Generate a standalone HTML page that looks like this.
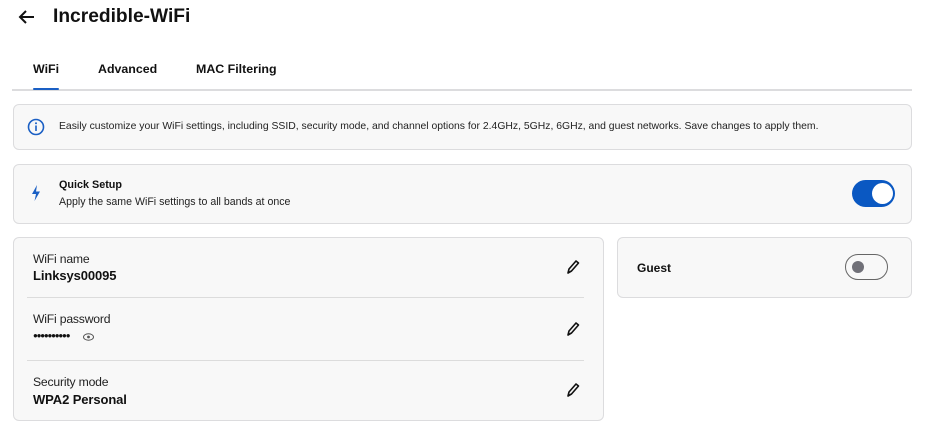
<!DOCTYPE html>
<html><head><style>
body{margin:0;width:938px;height:435px;background:#fff;font-family:"Liberation Sans",sans-serif;color:#111;position:relative;overflow:hidden}
.a{position:absolute}
.box{position:absolute;background:#f8f8f8;border:1.5px solid #dcdcde;border-radius:6px;box-sizing:border-box}
.lbl{font-size:12.2px;color:#222;letter-spacing:-0.2px}
.val{font-size:13px;font-weight:bold;letter-spacing:-0.1px}
.hr{position:absolute;left:27px;width:557px;height:1px;background:#dcdcdc}
</style></head><body>
<svg class="a" style="left:17px;top:9px" width="18" height="16" viewBox="0 0 18 16"><path d="M17 8H3M9 2L3 8l6 6" stroke="#111" stroke-width="2" fill="none"/></svg>
<div class="a" style="left:53px;top:6px;font-size:19.2px;font-weight:bold">Incredible-WiFi</div>
<div class="a" style="left:33px;top:62px;font-size:12.4px;font-weight:bold">WiFi</div>
<div class="a" style="left:98px;top:62px;font-size:12.4px;font-weight:bold">Advanced</div>
<div class="a" style="left:196px;top:62px;font-size:12.4px;font-weight:bold">MAC Filtering</div>
<div class="a" style="left:12px;top:89px;width:900px;height:1.5px;background:#dcdcde"></div>
<div class="a" style="left:33px;top:87.5px;width:26px;height:2.5px;background:#1a5fc4;border-radius:1px"></div>
<div class="box" style="left:13px;top:104px;width:899px;height:46px"></div>
<svg class="a" style="left:27px;top:118px" width="18" height="18" viewBox="0 0 18 18"><circle cx="9" cy="9" r="7.5" stroke="#1a5fc4" stroke-width="1.6" fill="none"/><rect x="8.2" y="7.5" width="1.6" height="5.5" fill="#1a5fc4"/><circle cx="9" cy="5.3" r="1" fill="#1a5fc4"/></svg>
<div class="a" style="left:59px;top:121px;font-size:10.4px;color:#222">Easily customize your WiFi settings, including SSID, security mode, and channel options for 2.4GHz, 5GHz, 6GHz, and guest networks. Save changes to apply them.</div>
<div class="box" style="left:13px;top:164px;width:899px;height:60px"></div>
<svg class="a" style="left:31px;top:185px" width="10" height="16" viewBox="0 0 10 16"><path d="M6 0L1 9h4l-1.5 7L9 6.5H5z" fill="#1a5fc4"/></svg>
<div class="a" style="left:59px;top:179px;font-size:10.8px;font-weight:bold">Quick Setup</div>
<div class="a" style="left:59px;top:196px;font-size:10.6px;color:#222">Apply the same WiFi settings to all bands at once</div>
<div class="a" style="left:852px;top:180px;width:43px;height:27px;border-radius:14px;background:#0a58c2"></div>
<div class="a" style="left:872px;top:183px;width:21px;height:21px;border-radius:50%;background:#fff"></div>
<div class="box" style="left:13px;top:237px;width:591px;height:184px"></div>
<div class="a lbl" style="left:33px;top:252px">WiFi name</div>
<div class="a val" style="left:33px;top:268px">Linksys00095</div>
<div class="hr" style="top:297px"></div>
<div class="a lbl" style="left:33px;top:312px">WiFi password</div>
<div class="a" style="left:33px;top:331px;font-size:8px;letter-spacing:-1.2px">●●●●●●●●●●</div>
<svg class="a" style="left:83px;top:333px" width="11" height="8" viewBox="0 0 11 8"><ellipse cx="5.5" cy="4" rx="5" ry="3.2" stroke="#555" fill="none"/><circle cx="5.5" cy="4" r="1.4" fill="#555"/></svg>
<div class="hr" style="top:360px"></div>
<div class="a lbl" style="left:33px;top:375px">Security mode</div>
<div class="a val" style="left:33px;top:392px">WPA2 Personal</div>
<svg class="a" style="left:566px;top:259px" width="14" height="16" viewBox="0 0 14 16"><path d="M2 14l1-4 7-8 2.5 2-7 8z" stroke="#111" stroke-width="1.6" fill="none" stroke-linejoin="round"/></svg>
<svg class="a" style="left:566px;top:321px" width="14" height="16" viewBox="0 0 14 16"><path d="M2 14l1-4 7-8 2.5 2-7 8z" stroke="#111" stroke-width="1.6" fill="none" stroke-linejoin="round"/></svg>
<svg class="a" style="left:566px;top:382px" width="14" height="16" viewBox="0 0 14 16"><path d="M2 14l1-4 7-8 2.5 2-7 8z" stroke="#111" stroke-width="1.6" fill="none" stroke-linejoin="round"/></svg>
<div class="box" style="left:617px;top:237px;width:295px;height:61px"></div>
<div class="a" style="left:637px;top:261px;font-size:12px;font-weight:bold">Guest</div>
<div class="a" style="left:845px;top:254px;width:43px;height:26px;border-radius:13px;border:1.5px solid #666;box-sizing:border-box;background:#f8f8f8"></div>
<div class="a" style="left:852px;top:261px;width:12px;height:12px;border-radius:50%;background:#707078"></div>
</body></html>
